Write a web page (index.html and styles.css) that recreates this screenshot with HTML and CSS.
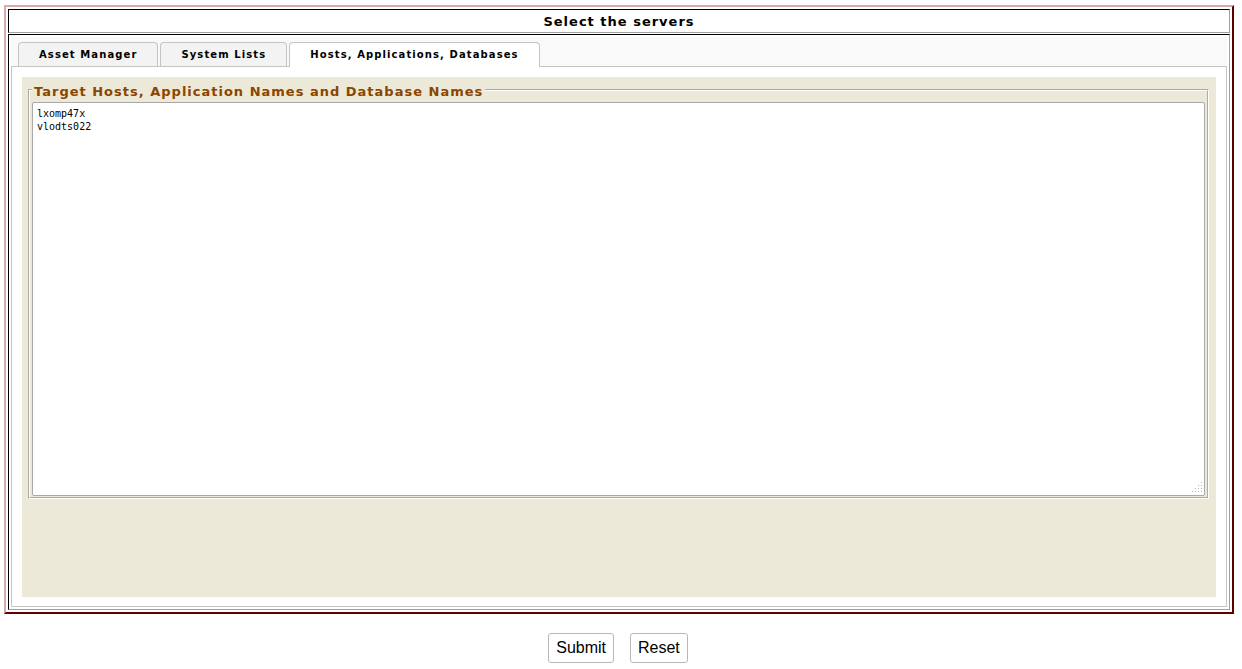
FILE: index.html
```html
<!DOCTYPE html>
<html>
<head>
<meta charset="utf-8">
<title>Select the servers</title>
<link rel="stylesheet" href="styles.css">
</head>
<body>
<div class="frame">
  <div class="title-cell">Select the servers</div>
  <div class="main-cell">
    <ul class="tab-nav">
      <li class="tab">Asset Manager</li>
      <li class="tab">System Lists</li>
      <li class="tab active">Hosts, Applications, Databases</li>
    </ul>
    <div class="tab-panel">
      <div class="pane">
        <fieldset class="group">
          <legend>Target Hosts, Application Names and Database Names</legend>
          <div class="hosts-wrap">
            <textarea class="hosts">lxomp47x
vlodts022</textarea>
            <svg class="grip" width="14" height="11" viewBox="0 0 14 11" aria-hidden="true">
              <g fill="#b4b4b4">
                <rect x="12" y="0" width="1" height="1"/>
                <rect x="9" y="3" width="1" height="1"/><rect x="12" y="3" width="1" height="1"/>
                <rect x="6" y="6" width="1" height="1"/><rect x="9" y="6" width="1" height="1"/><rect x="12" y="6" width="1" height="1"/>
                <rect x="3" y="9" width="1" height="1"/><rect x="6" y="9" width="1" height="1"/><rect x="9" y="9" width="1" height="1"/><rect x="12" y="9" width="1" height="1"/>
              </g>
            </svg>
          </div>
        </fieldset>
      </div>
    </div>
  </div>
</div>
<div class="actions">
  <button class="btn">Submit</button>
  <button class="btn">Reset</button>
</div>
</body>
</html>
```

FILE: styles.css
```css
body {
  margin: 5px 0 0 4px;
  background: #fff;
  font-family: "DejaVu Sans", sans-serif;
  color: #000;
}

.frame {
  width: 1230px;
  box-sizing: border-box;
  border: 2px solid;
  border-color: #d8aaaa #5c0000 #5c0000 #d8aaaa;
  padding: 2px;
  display: flex;
  flex-direction: column;
  gap: 1px;
}

.title-cell {
  height: 24px;
  box-sizing: border-box;
  border: 1px solid;
  border-color: #000 #a0a0a0 #a0a0a0 #000;
  padding-top: 2px;
  text-align: center;
  font-weight: bold;
  font-size: 13px;
  letter-spacing: 1px;
  line-height: 20px;
}

.main-cell {
  border: 1px solid;
  border-color: #000 #a0a0a0 #a0a0a0 #000;
  padding: 2px;
}

.tab-nav {
  list-style: none;
  margin: 0;
  padding: 5px 0 0 7px;
  height: 29px;
  box-sizing: border-box;
  background: #f9f9f9;
  display: flex;
  align-items: flex-start;
  gap: 2px;
}

.tab {
  height: 24px;
  box-sizing: border-box;
  border: 1px solid #c5c5c5;
  border-bottom: none;
  border-radius: 4px 4px 0 0;
  padding: 0 20px;
  background: #f3f3f3;
  font-size: 10px;
  font-weight: bold;
  letter-spacing: 1.1px;
  line-height: 23px;
  white-space: nowrap;
}

.tab.active {
  height: 25px;
  background: #fff;
  position: relative;
  z-index: 1;
}

.tab-panel {
  border: 1px solid #c5c5c5;
  padding: 10px 10px 9px;
  background: #fff;
}

.pane {
  background: #ece9d8;
  height: 520px;
  box-sizing: border-box;
  padding: 3px 7px 0 6px;
}

.group {
  margin: 0;
  border: 2px groove #fff;
  padding: 3px 2px 1px;
}

.group legend {
  padding: 4px 2px 0;
  color: #8b4500;
  font-weight: bold;
  font-size: 13px;
  letter-spacing: 1px;
}

.hosts-wrap {
  position: relative;
}

.hosts {
  display: block;
  width: 100%;
  height: 394px;
  box-sizing: border-box;
  margin: 0;
  padding: 4px;
  border: 1px solid #a9a9a9;
  border-radius: 2px;
  background: #fff;
  color: #000;
  font-family: "DejaVu Sans Mono", monospace;
  font-size: 10px;
  line-height: 13px;
  resize: none;
}

.grip {
  position: absolute;
  right: 2px;
  bottom: 3px;
}

.actions {
  margin-top: 19px;
  padding-right: 10px;
  display: flex;
  justify-content: center;
  gap: 16px;
}

.btn {
  font-family: "Liberation Sans", Arial, sans-serif;
  font-size: 16px;
  line-height: 18px;
  padding: 5px 7px;
  border: 1px solid #b8b8b8;
  border-radius: 3px;
  background: #fff;
  color: #000;
}
```
